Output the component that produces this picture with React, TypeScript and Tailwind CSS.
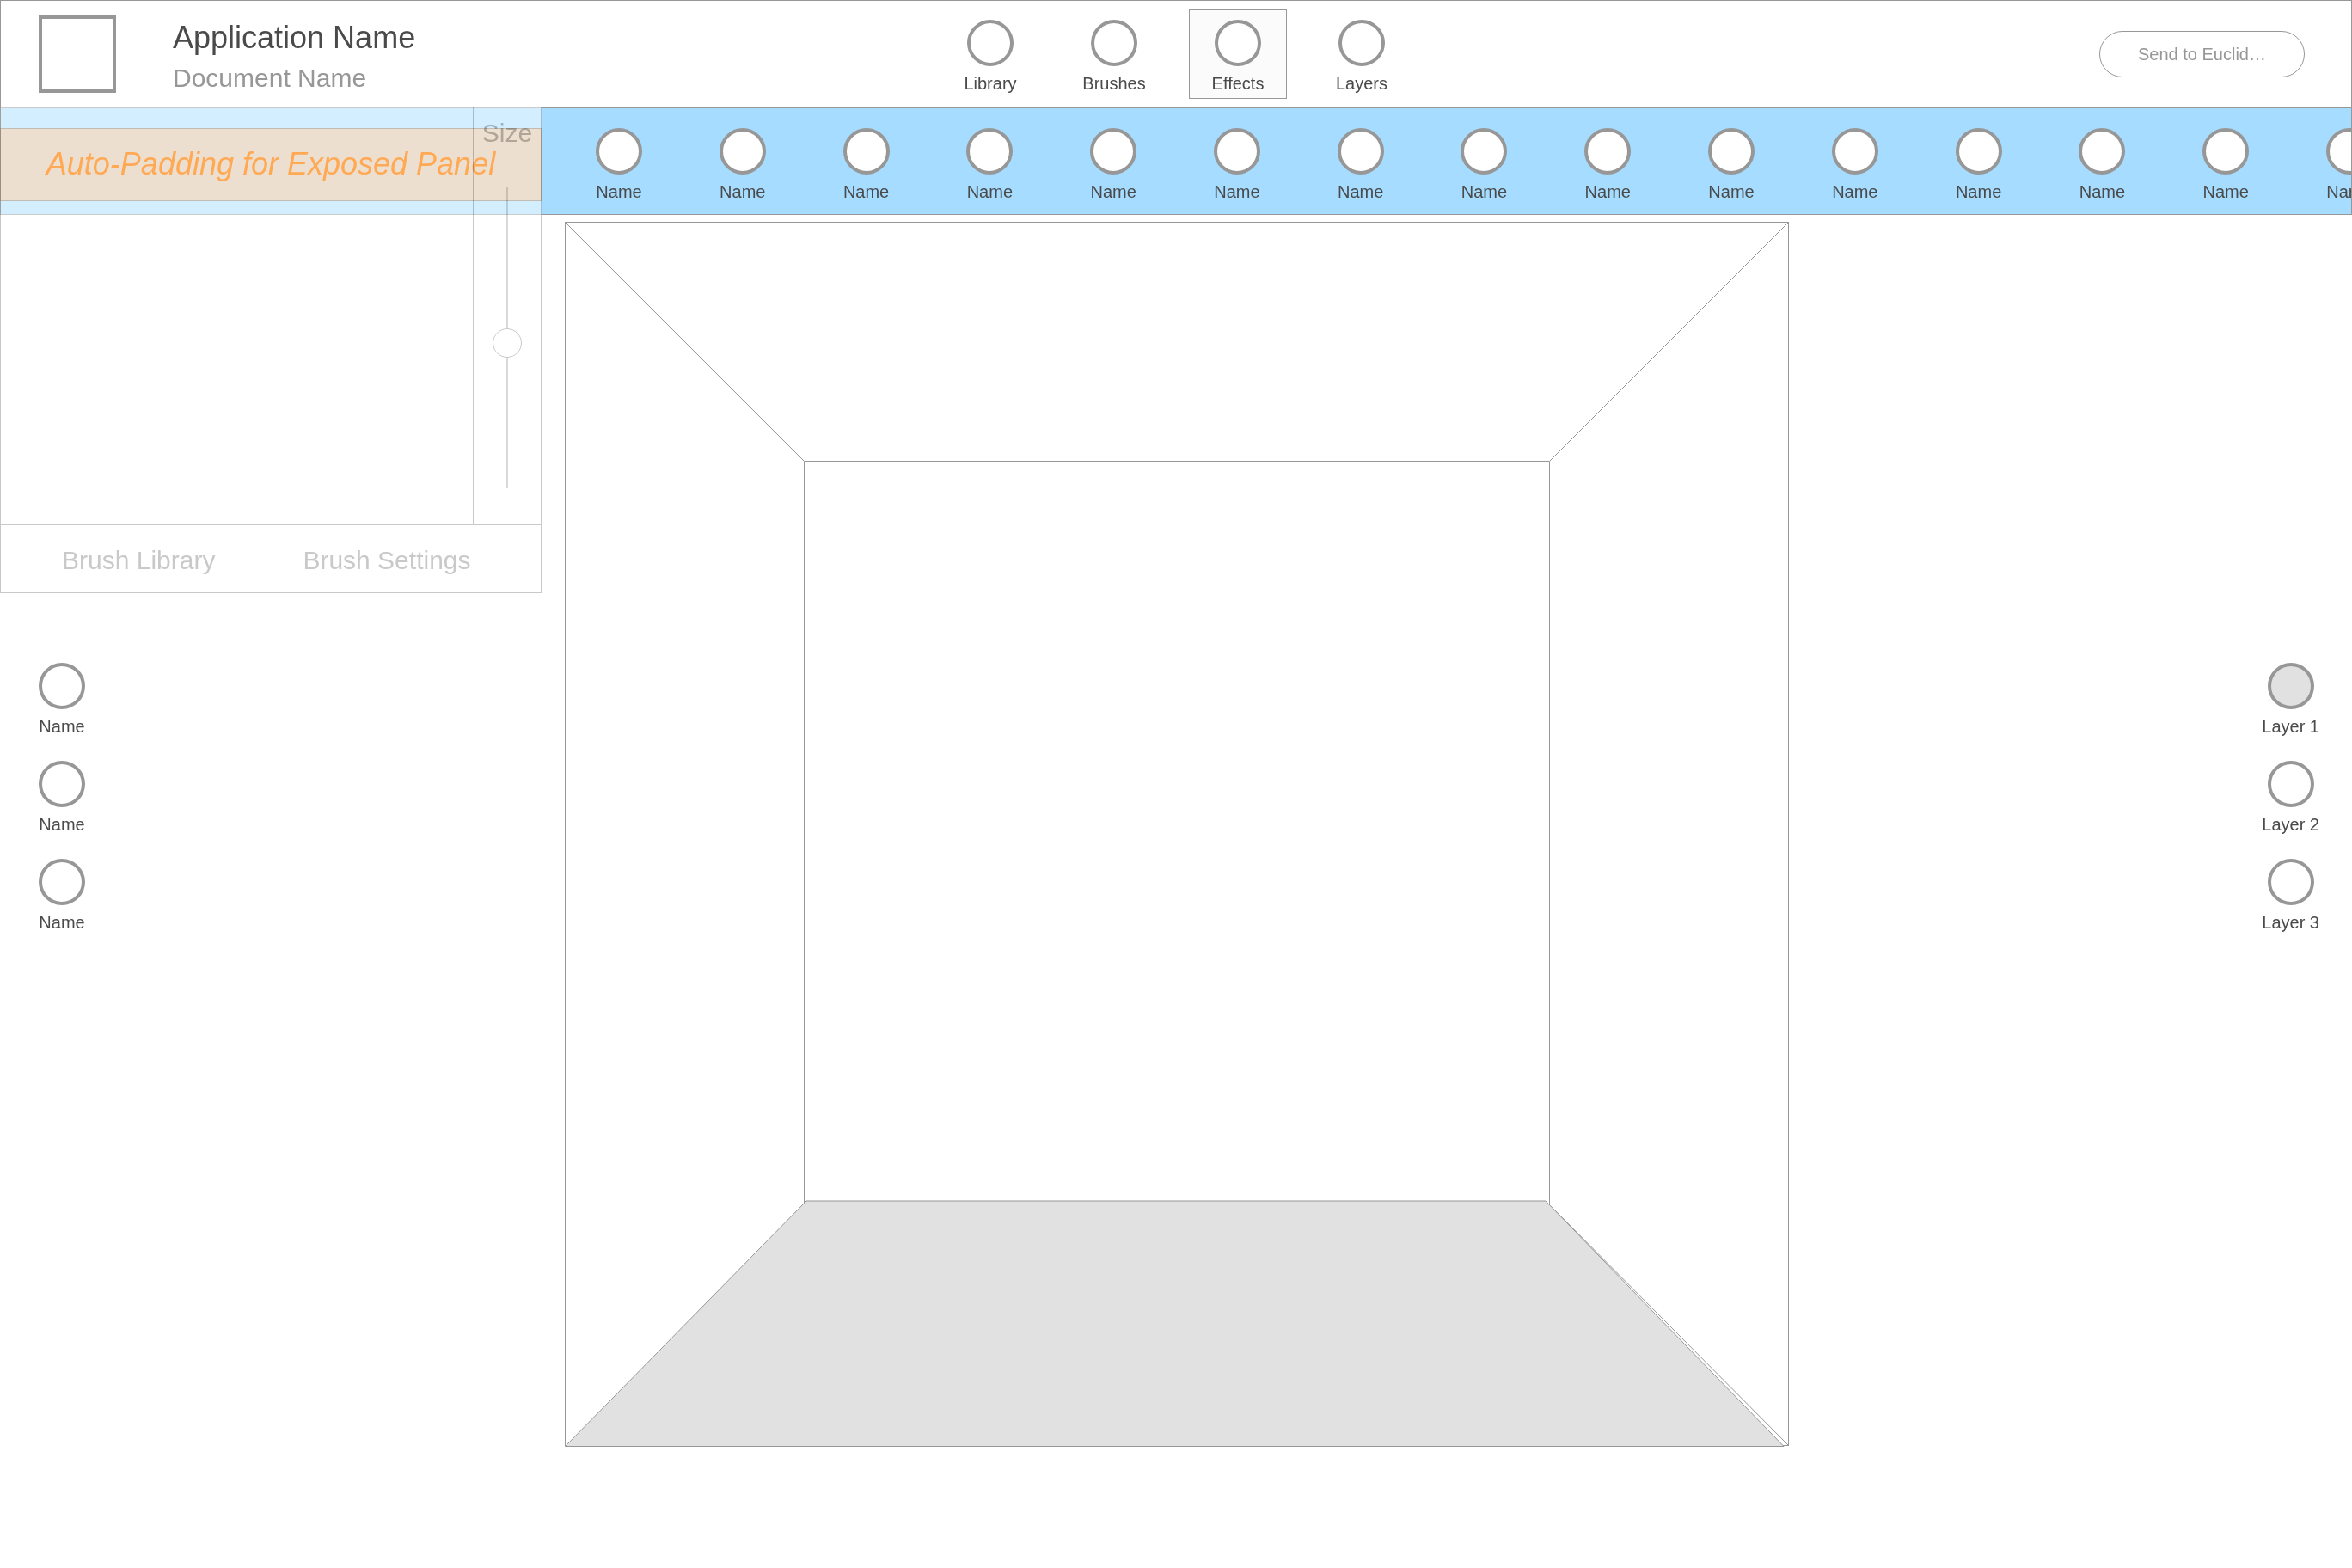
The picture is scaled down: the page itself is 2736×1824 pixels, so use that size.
import React from "react";

type DotItemProps = { label: string; filled?: boolean; className?: string };

function DotItem({ label, filled = false, className = "" }: DotItemProps) {
  return (
    <button type="button" className={`flex flex-col items-center whitespace-nowrap ${className}`}>
      <span
        className={`size-[54px] shrink-0 rounded-full border-4 border-[#979797] ${filled ? "bg-[#e1e1e1]" : "bg-white"}`}
      />
      <span className="mt-2 text-[20px] leading-6 text-[#4a4a4a]">{label}</span>
    </button>
  );
}

function Header() {
  const tabs = ["Library", "Brushes", "Effects", "Layers"];
  return (
    <header className="grid h-[125px] grid-cols-[1fr_auto_1fr] items-center border border-[#979797] px-11">
      <div className="flex items-center gap-[66px]">
        <div className="size-[90px] border-4 border-[#979797]" />
        <div className="pt-2">
          <h1 className="text-[36px] leading-[48px] text-[#4a4a4a]">Application Name</h1>
          <p className="text-[30px] leading-[46px] text-[#979797]">Document Name</p>
        </div>
      </div>
      <nav className="flex gap-[30px]">
        {tabs.map((tab) => (
          <DotItem
            key={tab}
            label={tab}
            className={`h-[104px] w-[114px] border pt-[11px] ${
              tab === "Effects" ? "border-[#979797] bg-[#fbfbfb]" : "border-transparent"
            }`}
          />
        ))}
      </nav>
      <div className="flex justify-end pr-2.5">
        <button
          type="button"
          className="h-[54px] w-[239px] rounded-full border border-[#979797] text-[20px] text-[#979797]"
        >
          Send to Euclid…
        </button>
      </div>
    </header>
  );
}

function BrushPanel() {
  return (
    <aside className="absolute top-0 left-0 w-[630px] bg-white/50">
      <div className="absolute inset-x-0 top-6 flex h-[85px] items-center justify-center border border-[#979797]/50 bg-[#ffd6af]/60 pb-0.5 text-[36px] whitespace-nowrap text-[#ffa954] italic">
        Auto-Padding for Exposed Panel
      </div>
      <div className="relative border border-t-0 border-[#c9c9c9] mix-blend-multiply">
        <div className="flex h-[486px] border-b border-[#c9c9c9]">
          <div className="flex-1 border-r border-[#c9c9c9]" />
          <div className="flex w-[78px] flex-col items-center pt-2">
            <label htmlFor="brush-size" className="text-[30px] leading-[44px] text-[#bdbdbd]">
              Size
            </label>
            <div className="relative mt-10 flex h-[351px] w-9 justify-center">
              <div className="w-0.5 bg-[#d9d9d9]" />
              <input
                id="brush-size"
                type="range"
                defaultValue={52}
                className="absolute inset-0 h-full w-full appearance-none bg-transparent [writing-mode:vertical-lr] [&::-webkit-slider-thumb]:size-[34px] [&::-webkit-slider-thumb]:appearance-none [&::-webkit-slider-thumb]:rounded-full [&::-webkit-slider-thumb]:border [&::-webkit-slider-thumb]:border-[#c9c9c9] [&::-webkit-slider-thumb]:bg-white"
              />
            </div>
          </div>
        </div>
        <div className="flex h-[78px] items-center gap-[102px] pt-0.5 pl-[71px] text-[30px] text-[#c9c9c9]">
          <button type="button">Brush Library</button>
          <button type="button">Brush Settings</button>
        </div>
      </div>
    </aside>
  );
}

function EffectsBar() {
  return (
    <div className="h-[125px] overflow-hidden border border-[#979797] bg-[#a5dcff] pl-[692px]">
      <div className="-mr-[25px] flex justify-between pt-[23px]">
        {Array.from({ length: 15 }, (_, i) => (
          <DotItem key={i} label="Name" className="w-[54px]" />
        ))}
      </div>
    </div>
  );
}

function Room() {
  return (
    <svg
      viewBox="0 0 1426 1426"
      className="mx-auto mt-[7px] block w-[1426px]"
      fill="none"
      stroke="#979797"
      role="img"
      aria-label="Room canvas"
    >
      <rect x="2.5" y="1.5" width="1423" height="1423" />
      <path d="M2.5 1.5 280.5 279.5M1425.5 1.5 1147.5 279.5M1143 1140 1425.5 1424.5" />
      <path d="M280.5 1144V279.5H1147.5V1144" />
      <path d="M2.5 1425.5 283 1140H1143L1420 1425.5Z" fill="#e1e1e1" />
    </svg>
  );
}

export default function App() {
  return (
    <div className="min-h-screen overflow-hidden bg-white font-['Liberation_Sans',Arial,sans-serif]">
      <Header />
      <div className="relative">
        <EffectsBar />
        <BrushPanel />
        <main className="grid grid-cols-[1fr_auto_1fr]">
          <div className="flex flex-col items-start gap-7 pt-[521px] pl-[45px]">
            <DotItem label="Name" />
            <DotItem label="Name" />
            <DotItem label="Name" />
          </div>
          <Room />
          <div className="flex flex-col items-end gap-7 pt-[521px] pr-[38px]">
            <DotItem label="Layer 1" filled />
            <DotItem label="Layer 2" />
            <DotItem label="Layer 3" />
          </div>
        </main>
      </div>
    </div>
  );
}
